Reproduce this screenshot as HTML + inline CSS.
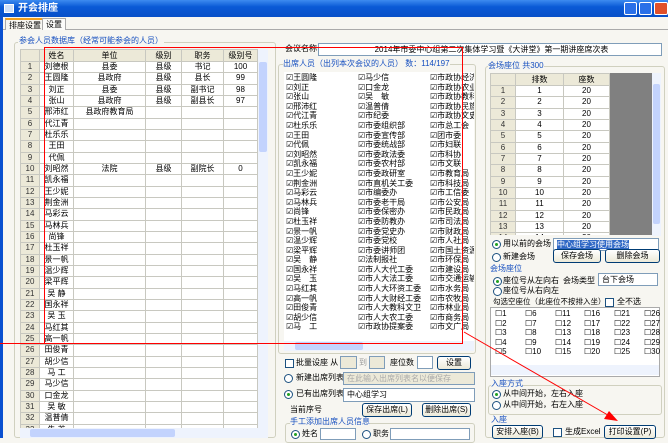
<!DOCTYPE html>
<html><head><meta charset="utf-8"><style>
*{margin:0;padding:0;box-sizing:border-box}
body{width:668px;height:438px;overflow:hidden;background:#f7f6f1;font-family:"Liberation Sans","Noto Sans CJK SC",sans-serif;font-size:8px;line-height:10px;color:#000;position:relative}
.a{position:absolute;white-space:nowrap}
.title{left:0;top:0;width:668px;height:17px;background:linear-gradient(#3d8bf0,#0a5ad6 40%,#0850c8);color:#fff;font-weight:bold;font-size:10px;line-height:17px;padding-left:18px}
.lb{left:0;top:17px;width:3px;height:421px;background:#0a50d0}
.tab{top:18px;height:12px;line-height:11px;padding:0 3px;border:1px solid #aaa;border-bottom:none;background:#fcfcfa;font-size:8px}
.blue{color:#1750c0}
.grp{border:1px solid #d0d0bf;border-radius:3px}
.tw{position:absolute;overflow:hidden}
table{border-collapse:collapse;table-layout:fixed;font-size:8px;line-height:10px}
td{border:1px solid #c8c8c0;height:11.33px;text-align:center;padding:0;overflow:hidden;white-space:nowrap;background:#fff}
td.n{background:#ece9d8;color:#333}
tr.h td{background:#ece9d8;height:12px}
.cb{position:absolute;width:9px;height:9px;border:1px solid #1c5180;background:#fff}
.ck{position:absolute;font-size:8px;line-height:9.6px;white-space:nowrap;overflow:hidden}
.btn{position:absolute;border:1px solid #003c74;border-radius:3px;background:linear-gradient(#fff,#ece9d8);font-size:8px;text-align:center;line-height:12px}
.inp{position:absolute;border:1px solid #7f9db9;background:#fff;font-size:8px;line-height:11px;padding-left:3px;overflow:hidden;white-space:nowrap}
.rd{position:absolute;width:9px;height:9px;border:1px solid #1c5180;border-radius:50%;background:#fff}
.rd.on::after{content:"";position:absolute;left:2px;top:2px;width:3px;height:3px;border-radius:50%;background:#21a121}
.sb{position:absolute;background:#eef3fd}
.red{position:absolute;background:#f00}
</style></head><body>
<div class="a title">开会排座</div>
<div class="a" style="left:4px;top:4px;width:10px;height:9px;background:#cfe0f8;border:1px solid #fff"></div>
<div class="a" style="left:624px;top:2px;width:13px;height:13px;background:#2a70e8;border:1px solid #fff;border-radius:2px"></div>
<div class="a" style="left:639px;top:2px;width:13px;height:13px;background:#2a70e8;border:1px solid #fff;border-radius:2px"></div>
<div class="a" style="left:654px;top:2px;width:14px;height:13px;background:#e0502a;border:1px solid #fff;border-radius:2px"></div>
<div class="a lb"></div>
<div class="a" style="left:3px;top:29px;width:665px;height:1px;background:#aaa"></div>
<div class="a tab" style="left:5px;background:#f7f6f1;border-top:2px solid #f0a020">排座设置</div>
<div class="a tab" style="left:42px">设置</div>

<div class="a grp" style="left:14px;top:42px;width:262px;height:396px"></div>
<div class="a blue" style="left:18px;top:36px;background:#f7f6f1;padding:0 1px">参会人员数据库（经常可能参会的人员）</div>
<div class="tw" style="left:20px;top:49px;width:238px;height:379px">
<table style="width:238px">
<colgroup><col style="width:19px"><col style="width:34px"><col style="width:72px"><col style="width:36px"><col style="width:42px"><col></colgroup>
<tr class="h"><td></td><td>姓名</td><td>单位</td><td>级别</td><td>职务</td><td>级别号</td></tr>
<tr><td class="n">1</td><td>刘德根</td><td>县委</td><td>县级</td><td>书记</td><td>100</td></tr>
<tr><td class="n">2</td><td>王圆隆</td><td>县政府</td><td>县级</td><td>县长</td><td>99</td></tr>
<tr><td class="n">3</td><td>刘正</td><td>县委</td><td>县级</td><td>副书记</td><td>98</td></tr>
<tr><td class="n">4</td><td>张山</td><td>县政府</td><td>县级</td><td>副县长</td><td>97</td></tr>
<tr><td class="n">5</td><td>邢沛红</td><td>县政府教育局</td><td></td><td></td><td></td></tr>
<tr><td class="n">6</td><td>代江青</td><td></td><td></td><td></td><td></td></tr>
<tr><td class="n">7</td><td>杜乐乐</td><td></td><td></td><td></td><td></td></tr>
<tr><td class="n">8</td><td>王田</td><td></td><td></td><td></td><td></td></tr>
<tr><td class="n">9</td><td>代佩</td><td></td><td></td><td></td><td></td></tr>
<tr><td class="n">10</td><td>刘昭然</td><td>法院</td><td>县级</td><td>副院长</td><td>0</td></tr>
<tr><td class="n">11</td><td>凯永福</td><td></td><td></td><td></td><td></td></tr>
<tr><td class="n">12</td><td>王少妮</td><td></td><td></td><td></td><td></td></tr>
<tr><td class="n">13</td><td>荆金洲</td><td></td><td></td><td></td><td></td></tr>
<tr><td class="n">14</td><td>马彩云</td><td></td><td></td><td></td><td></td></tr>
<tr><td class="n">15</td><td>马林兵</td><td></td><td></td><td></td><td></td></tr>
<tr><td class="n">16</td><td>尚锋</td><td></td><td></td><td></td><td></td></tr>
<tr><td class="n">17</td><td>杜玉祥</td><td></td><td></td><td></td><td></td></tr>
<tr><td class="n">18</td><td>景一帆</td><td></td><td></td><td></td><td></td></tr>
<tr><td class="n">19</td><td>温少辉</td><td></td><td></td><td></td><td></td></tr>
<tr><td class="n">20</td><td>梁平辉</td><td></td><td></td><td></td><td></td></tr>
<tr><td class="n">21</td><td>吴 静</td><td></td><td></td><td></td><td></td></tr>
<tr><td class="n">22</td><td>国永祥</td><td></td><td></td><td></td><td></td></tr>
<tr><td class="n">23</td><td>吴 玉</td><td></td><td></td><td></td><td></td></tr>
<tr><td class="n">24</td><td>马红其</td><td></td><td></td><td></td><td></td></tr>
<tr><td class="n">25</td><td>高一帆</td><td></td><td></td><td></td><td></td></tr>
<tr><td class="n">26</td><td>田俊青</td><td></td><td></td><td></td><td></td></tr>
<tr><td class="n">27</td><td>胡少信</td><td></td><td></td><td></td><td></td></tr>
<tr><td class="n">28</td><td>马 工</td><td></td><td></td><td></td><td></td></tr>
<tr><td class="n">29</td><td>马少信</td><td></td><td></td><td></td><td></td></tr>
<tr><td class="n">30</td><td>口金龙</td><td></td><td></td><td></td><td></td></tr>
<tr><td class="n">31</td><td>吴 敏</td><td></td><td></td><td></td><td></td></tr>
<tr><td class="n">32</td><td>温普倩</td><td></td><td></td><td></td><td></td></tr>
<tr><td class="n">33</td><td>朱 英</td><td></td><td></td><td></td><td></td></tr>
</table></div>
<div class="sb" style="left:258px;top:49px;width:10px;height:379px"></div>
<div class="a" style="left:259px;top:62px;width:8px;height:90px;background:#c3d3fd;border-radius:2px"></div>
<div class="sb" style="left:20px;top:428px;width:248px;height:10px"></div>
<div class="a" style="left:30px;top:429px;width:145px;height:8px;background:#c3d3fd;border-radius:2px"></div>

<div class="a" style="left:285px;top:44px">会议名称</div>
<div class="inp" style="left:318px;top:43px;width:344px;height:13px;text-align:center">2014年市委中心组第二次集体学习暨《大讲堂》第一期讲座席次表</div>
<div class="a grp" style="left:278px;top:64px;width:198px;height:290px"></div>
<div class="a blue" style="left:283px;top:59px;background:#f7f6f1">出席人员（出列本次会议的人员） 数：114/197</div>
<div class="a" style="left:284px;top:72px;width:190px;height:269px;background:#fff"></div>

<div class="ck" style="left:286px;top:73px;width:68px">☑王圆隆<br>☑刘正<br>☑张山<br>☑邢沛红<br>☑代江青<br>☑杜乐乐<br>☑王田<br>☑代佩<br>☑刘昭然<br>☑凯永福<br>☑王少妮<br>☑荆金洲<br>☑马彩云<br>☑马林兵<br>☑尚锋<br>☑杜玉祥<br>☑景一帆<br>☑温少辉<br>☑梁平辉<br>☑吴　静<br>☑国永祥<br>☑吴　玉<br>☑马红其<br>☑高一帆<br>☑田俊青<br>☑胡少信<br>☑马　工</div>
<div class="ck" style="left:358px;top:73px;width:70px">☑马少信<br>☑口金龙<br>☑吴　敏<br>☑温普倩<br>☑市纪委<br>☑市委组织部<br>☑市委宣传部<br>☑市委统战部<br>☑市委政法委<br>☑市委农村部<br>☑市委政研室<br>☑市直机关工委<br>☑市编委办<br>☑市委老干局<br>☑市委保密办<br>☑市委防教办<br>☑市委党史办<br>☑市委党校<br>☑市委讲师团<br>☑法制报社<br>☑市人大代工委<br>☑市人大法工委<br>☑市人大环资工委<br>☑市人大财经工委<br>☑市人大教科文卫<br>☑市人大农工委<br>☑市政协提案委</div>
<div class="ck" style="left:430px;top:73px;width:44px">☑市政协经济<br>☑市政协农业<br>☑市政协教科<br>☑市政协民族<br>☑市政协文史<br>☑市总工会<br>☑团市委<br>☑市妇联<br>☑市科协<br>☑市文联<br>☑市教育局<br>☑市科技局<br>☑市工信委<br>☑市公安局<br>☑市民政局<br>☑市司法局<br>☑市财政局<br>☑市人社局<br>☑市国土资源<br>☑市环保局<br>☑市建设局<br>☑市交通运输<br>☑市水务局<br>☑市农牧局<br>☑市林业局<br>☑市商务局<br>☑市文广局</div>
<div class="sb" style="left:284px;top:341px;width:190px;height:10px"></div>
<div class="a" style="left:295px;top:342px;width:68px;height:8px;background:#c3d3fd;border-radius:2px"></div>

<div class="cb" style="left:285px;top:359px"></div>
<div class="a" style="left:296px;top:358px">批量设座 从</div>
<div class="inp" style="left:340px;top:356px;width:17px;height:13px;background:#ece9d8"></div>
<div class="a" style="left:359px;top:358px;color:#999">到</div>
<div class="inp" style="left:369px;top:356px;width:16px;height:13px;background:#ece9d8"></div>
<div class="a" style="left:390px;top:358px">座位数</div>
<div class="inp" style="left:417px;top:356px;width:16px;height:13px"></div>
<div class="btn" style="left:437px;top:356px;width:34px;height:14px">设置</div>
<div class="rd" style="left:284px;top:374px"></div>
<div class="a" style="left:296px;top:373px">新建出席列表</div>
<div class="inp" style="left:343px;top:372px;width:132px;height:13px;background:#ece9d8;color:#aaa">在此输入出席列表名以便保存</div>
<div class="rd on" style="left:284px;top:390px"></div>
<div class="a" style="left:296px;top:389px">已有出席列表</div>
<div class="inp" style="left:343px;top:388px;width:132px;height:14px">中心组学习</div>
<div class="a" style="left:290px;top:405px">当前序号</div>
<div class="btn" style="left:362px;top:403px;width:50px;height:14px">保存出席(L)</div>
<div class="btn" style="left:422px;top:403px;width:49px;height:14px">删除出席(S)</div>
<div class="a grp" style="left:285px;top:423px;width:190px;height:20px"></div>
<div class="a blue" style="left:290px;top:417px;background:#f7f6f1">手工添加出席人员信息</div>
<div class="rd on" style="left:291px;top:430px"></div>
<div class="a" style="left:302px;top:429px">姓名</div>
<div class="inp" style="left:320px;top:428px;width:36px;height:12px"></div>
<div class="rd" style="left:362px;top:430px"></div>
<div class="a" style="left:373px;top:429px">职务</div>
<div class="inp" style="left:390px;top:428px;width:80px;height:12px"></div>

<div class="a grp" style="left:485px;top:66px;width:180px;height:372px"></div>
<div class="a blue" style="left:488px;top:61px;background:#f7f6f1">会场座位 共300</div>
<div class="a" style="left:610px;top:73px;width:42px;height:162px;background:#808080"></div>
<div class="tw" style="left:490px;top:73px;width:120px;height:162px">
<table style="width:120px">
<colgroup><col style="width:25px"><col style="width:48px"><col></colgroup>
<tr class="h"><td></td><td>排数</td><td>座数</td></tr>
<tr><td class="n">1</td><td>1</td><td>20</td></tr>
<tr><td class="n">2</td><td>2</td><td>20</td></tr>
<tr><td class="n">3</td><td>3</td><td>20</td></tr>
<tr><td class="n">4</td><td>4</td><td>20</td></tr>
<tr><td class="n">5</td><td>5</td><td>20</td></tr>
<tr><td class="n">6</td><td>6</td><td>20</td></tr>
<tr><td class="n">7</td><td>7</td><td>20</td></tr>
<tr><td class="n">8</td><td>8</td><td>20</td></tr>
<tr><td class="n">9</td><td>9</td><td>20</td></tr>
<tr><td class="n">10</td><td>10</td><td>20</td></tr>
<tr><td class="n">11</td><td>11</td><td>20</td></tr>
<tr><td class="n">12</td><td>12</td><td>20</td></tr>
<tr><td class="n">13</td><td>13</td><td>20</td></tr>
<tr><td class="n">14</td><td>14</td><td>20</td></tr>
</table></div>
<div class="sb" style="left:652px;top:73px;width:9px;height:163px"></div>
<div class="a" style="left:653px;top:84px;width:7px;height:140px;background:#c3d3fd;border-radius:2px"></div>

<div class="rd on" style="left:492px;top:240px"></div>
<div class="a" style="left:503px;top:239px">用以前的会场</div>
<div class="inp" style="left:553px;top:238px;width:106px;height:13px"><span style="background:#3169c6;color:#fff">中心组学习使用会场</span></div>
<div class="rd" style="left:492px;top:253px"></div>
<div class="a" style="left:503px;top:252px">新建会场</div>
<div class="btn" style="left:553px;top:249px;width:48px;height:14px">保存会场</div>
<div class="btn" style="left:605px;top:249px;width:55px;height:14px">删除会场</div>
<div class="a blue" style="left:490px;top:264px">会场座位</div>
<div class="rd on" style="left:493px;top:277px"></div>
<div class="a" style="left:503px;top:276px">座位号从左向右</div>
<div class="a" style="left:563px;top:276px">会场类型</div>
<div class="inp" style="left:598px;top:273px;width:60px;height:13px">台下会场</div>
<div class="rd" style="left:493px;top:287px"></div>
<div class="a" style="left:503px;top:286px">座位号从右向左</div>
<div class="a" style="left:493px;top:297px;font-size:7.5px">勾选空座位（此座位不按排入坐）</div>
<div class="cb" style="left:605px;top:298px"></div>
<div class="a" style="left:617px;top:297px">全不选</div>
<div class="a" style="left:490px;top:307px;width:170px;height:70px;background:#fff;border:1px solid #aaa"></div>
<div class="ck" style="left:495px;top:309px">☐1<br>☐2<br>☐3<br>☐4<br>☐5</div>
<div class="ck" style="left:525px;top:309px">☐6<br>☐7<br>☐8<br>☐9<br>☐10</div>
<div class="ck" style="left:555px;top:309px">☐11<br>☐12<br>☐13<br>☐14<br>☐15</div>
<div class="ck" style="left:584px;top:309px">☐16<br>☐17<br>☐18<br>☐19<br>☐20</div>
<div class="ck" style="left:614px;top:309px">☐21<br>☐22<br>☐23<br>☐24<br>☐25</div>
<div class="ck" style="left:644px;top:309px;width:16px">☐26<br>☐27<br>☐28<br>☐29<br>☐30</div>
<div class="sb" style="left:491px;top:365px;width:168px;height:10px"></div>
<div class="a grp" style="left:488px;top:385px;width:174px;height:30px"></div>
<div class="a blue" style="left:491px;top:379px;background:#f7f6f1">入座方式</div>
<div class="rd on" style="left:492px;top:390px"></div>
<div class="a" style="left:503px;top:389px">从中间开始，左右入座</div>
<div class="rd" style="left:492px;top:401px"></div>
<div class="a" style="left:503px;top:400px">从中间开始，右左入座</div>
<div class="a blue" style="left:491px;top:415px">入座</div>
<div class="btn" style="left:492px;top:425px;width:51px;height:14px">安排入座(B)</div>
<div class="cb" style="left:553px;top:428px"></div>
<div class="a" style="left:565px;top:427px">生成Excel</div>
<div class="btn" style="left:604px;top:425px;width:52px;height:14px">打印设置(P)</div>

<div class="red" style="left:44px;top:47px;width:419px;height:1px"></div>
<div class="red" style="left:44px;top:47px;width:1px;height:297px"></div>
<div class="red" style="left:462px;top:47px;width:1px;height:297px"></div>
<div class="red" style="left:0;top:343px;width:463px;height:1px"></div>
<svg class="a" style="left:0;top:0" width="668" height="438"><line x1="464" y1="332" x2="613" y2="418" stroke="#f00" stroke-width="1"/><polygon points="618,421 604,419 609,411" fill="#f00"/></svg>
</body></html>
